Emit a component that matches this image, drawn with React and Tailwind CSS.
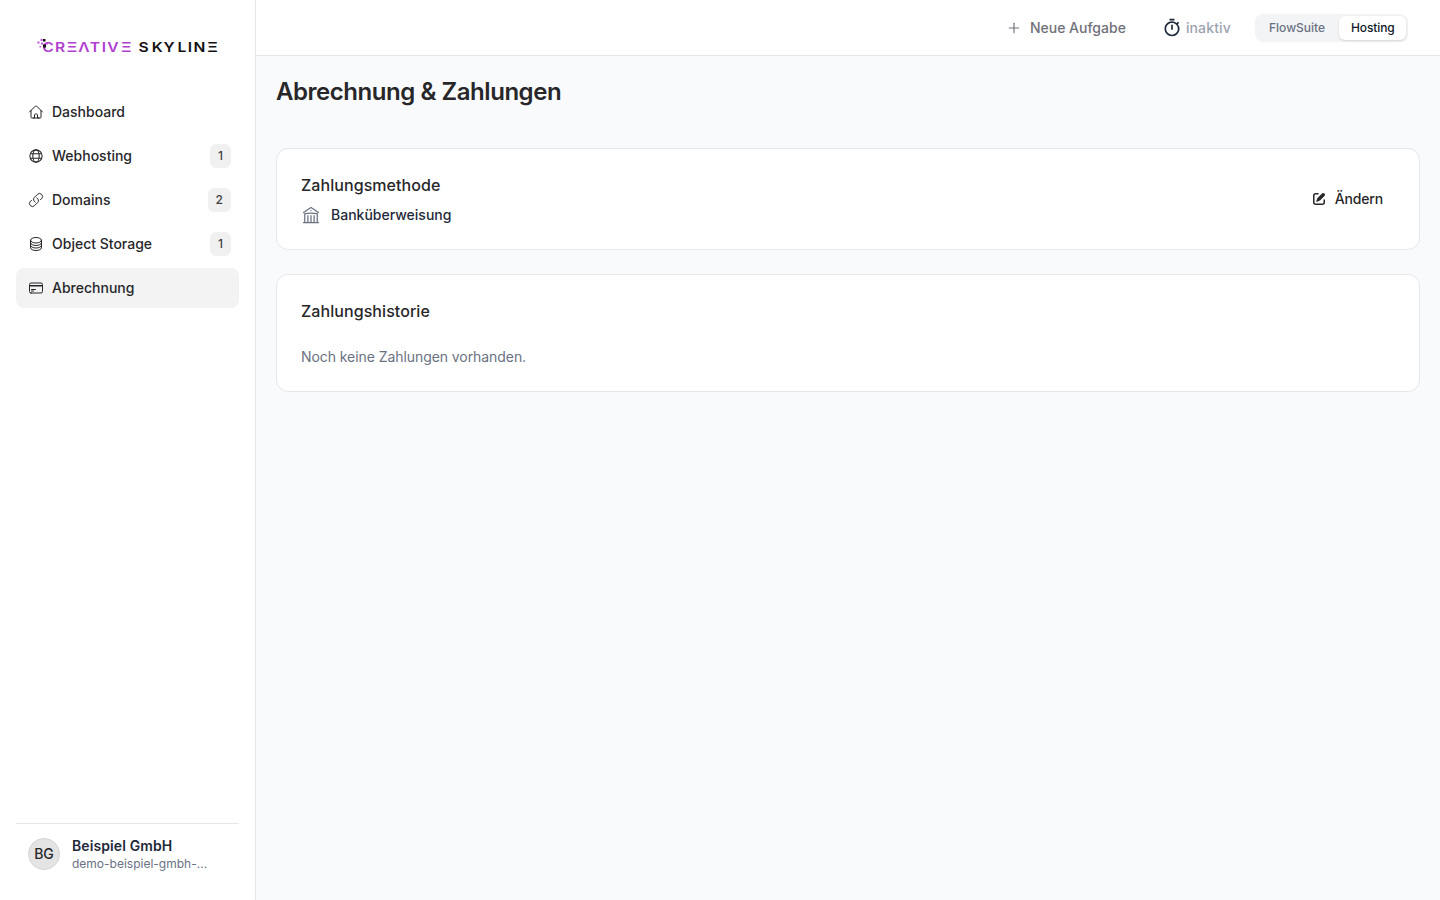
import {
  HiOutlineHome,
  HiOutlineLink,
  HiOutlineCircleStack,
  HiOutlineCreditCard,
  HiOutlineBuildingLibrary,
} from 'react-icons/hi2';
import { MdOutlineTimer } from 'react-icons/md';
import { Plus } from 'lucide-react';

function GlobeIcon({ size }) {
  return (
    <svg width={size} height={size} viewBox="0 0 24 24" fill="none" stroke="currentColor" strokeWidth="1.6">
      <circle cx="12" cy="12" r="9.2" />
      <ellipse cx="12" cy="12" rx="4.8" ry="9.2" />
      <path d="M3.8 8.6h16.4M3.8 15.4h16.4" />
    </svg>
  );
}

const navItems = [
  { label: 'Dashboard', icon: HiOutlineHome },
  { label: 'Webhosting', icon: GlobeIcon, count: 1 },
  { label: 'Domains', icon: HiOutlineLink, count: 2 },
  { label: 'Object Storage', icon: HiOutlineCircleStack, count: 1 },
  { label: 'Abrechnung', icon: HiOutlineCreditCard, active: true },
];

const logoPixels = [
  { x: 3.5, y: 3, size: 2, color: '#c04fe0' },
  { x: 6, y: 3, size: 2.5, color: '#111111' },
  { x: 0.5, y: 5.5, size: 2, color: '#c04fe0' },
  { x: 4, y: 6.5, size: 2, color: '#c04fe0' },
  { x: 9, y: 6.5, size: 2, color: '#c04fe0' },
  { x: 6, y: 8.5, size: 3, color: '#111111' },
  { x: 2.5, y: 10, size: 1.5, color: '#c04fe0' },
];

function Logo() {
  return (
    <svg width="182" height="20" viewBox="0 0 182 20" role="img" aria-label="Creative Skyline">
      {/* letters are stretched a bit, x positions are given before scaling */}
      <g transform="scale(1.2 1)" className="font-['Inter'] text-[13px] font-semibold" textAnchor="middle">
        <text y="16.5" fill="#b13fd0" x="9.2 19.3 29.2 39.2 48.3 55.8 63.3 74.5">CRΞΛTIVΞ</text>
        <text y="16.5" fill="#111111" x="88.8 100.2 110 120.8 127.5 135.4 146.3">SKYLINΞ</text>
      </g>
      {logoPixels.map((p) => (
        <rect key={`${p.x}-${p.y}`} x={p.x} y={p.y} width={p.size} height={p.size} fill={p.color} />
      ))}
    </svg>
  );
}

function EditIcon() {
  return (
    <svg width="16" height="16" viewBox="0 0 16 16" fill="currentColor">
      <path d="M13.488 2.513a1.75 1.75 0 0 0-2.475 0L6.75 6.774a2.75 2.75 0 0 0-.596.892l-.848 2.047a.75.75 0 0 0 .98.98l2.047-.848a2.75 2.75 0 0 0 .892-.596l4.261-4.262a1.75 1.75 0 0 0 0-2.474Z" />
      <path d="M4.75 3.5c-.69 0-1.25.56-1.25 1.25v6.5c0 .69.56 1.25 1.25 1.25h6.5c.69 0 1.25-.56 1.25-1.25V9A.75.75 0 0 1 14 9v2.25A2.75 2.75 0 0 1 11.25 14h-6.5A2.75 2.75 0 0 1 2 11.25v-6.5A2.75 2.75 0 0 1 4.75 2H7a.75.75 0 0 1 0 1.5H4.75Z" />
    </svg>
  );
}

function Sidebar() {
  return (
    <aside className="flex w-64 shrink-0 flex-col border-r border-gray-200 bg-white px-4">
      <div className="flex h-[92px] items-center justify-center">
        <Logo />
      </div>
      <nav className="flex flex-1 flex-col gap-1">
        {navItems.map(({ label, icon: Icon, count, active }) => (
          <a
            key={label}
            href="#"
            className={`flex h-10 items-center gap-2 rounded-lg pr-2 pl-3 text-sm font-medium text-[#27272a] ${active ? 'bg-[#f3f3f3]' : ''}`}
          >
            <Icon size={16} />
            <span className="flex-1">{label}</span>
            {count && (
              <span className="flex h-6 items-center rounded-md bg-[#f0f0f0] px-2 text-xs text-[#3f3f46]">
                {count}
              </span>
            )}
          </a>
        ))}
      </nav>
      <div className="flex h-[77px] items-start gap-3 border-t border-gray-200 px-3 pt-3">
        <div className="mt-0.5 flex size-8 items-center justify-center rounded-full border border-[#d4d4d4] bg-[#e4e4e4] text-sm font-medium text-[#27272a]">
          BG
        </div>
        <div className="min-w-0">
          <p className="text-sm font-semibold tracking-[0.1px] text-gray-800">Beispiel GmbH</p>
          <p className="text-xs text-gray-500">demo-beispiel-gmbh-…</p>
        </div>
      </div>
    </aside>
  );
}

function Topbar() {
  return (
    <header className="flex h-14 items-center justify-end border-b border-gray-200 bg-white pr-8">
      <button className="mr-9 flex items-center gap-2 text-sm font-medium text-[#71717a]">
        <Plus size={16} strokeWidth={1.75} />
        Neue Aufgabe
      </button>
      <div className="mr-6 flex items-center gap-1 text-sm font-medium tracking-[0.15px] text-[#9ca3af]">
        <MdOutlineTimer size={20} className="text-gray-800" />
        inaktiv
      </div>
      <div className="flex h-7 items-center rounded-lg bg-gray-100 p-0.5 text-xs font-medium">
        <button className="h-6 w-[82px] pl-3 text-left text-gray-500">FlowSuite</button>
        <button className="h-6 w-[67px] rounded-md bg-white pl-3 text-left tracking-[-0.1px] text-gray-900 shadow-sm">
          Hosting
        </button>
      </div>
    </header>
  );
}

export default function App() {
  return (
    <div className="flex h-screen bg-gray-50 font-['Inter',sans-serif]">
      <Sidebar />
      <div className="flex min-w-0 flex-1 flex-col">
        <Topbar />
        <main className="flex flex-1 flex-col p-5">
          <h1 className="text-2xl font-semibold tracking-[-0.45px] text-[#27272a]">Abrechnung & Zahlungen</h1>

          <section className="mt-10 flex h-[102px] items-center justify-between rounded-xl border border-gray-200 bg-white px-6">
            <div>
              <h2 className="text-base font-medium tracking-[0.07px] text-[#27272a]">Zahlungsmethode</h2>
              <div className="mt-2 flex items-center gap-2.5 text-sm font-medium text-gray-800">
                <HiOutlineBuildingLibrary size={20} className="text-gray-500" />
                Banküberweisung
              </div>
            </div>
            <button className="mr-3 flex items-center gap-2 text-sm font-medium tracking-[-0.15px] text-[#27272a]">
              <EditIcon />
              Ändern
            </button>
          </section>

          <section className="mt-6 h-[118px] rounded-xl border border-gray-200 bg-white p-6">
            <h2 className="text-base font-medium tracking-[0.07px] text-[#27272a]">Zahlungshistorie</h2>
            <p className="mt-6 text-sm tracking-[-0.07px] text-gray-500">Noch keine Zahlungen vorhanden.</p>
          </section>
        </main>
      </div>
    </div>
  );
}
